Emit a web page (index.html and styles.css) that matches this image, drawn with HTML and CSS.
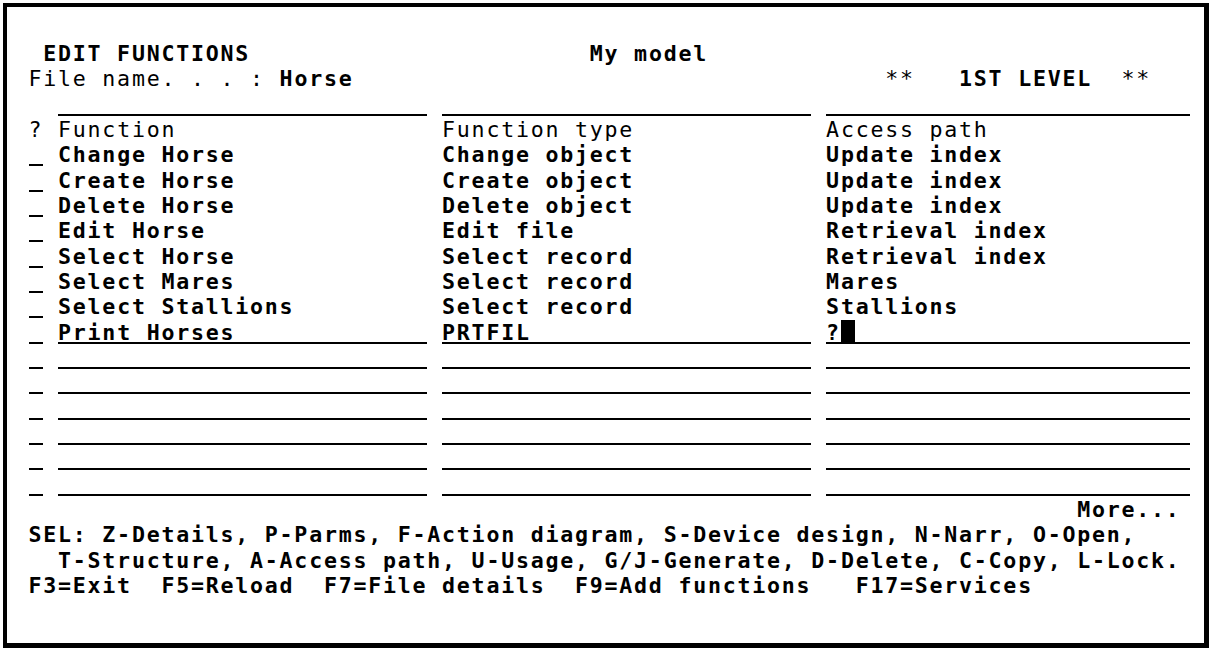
FILE: index.html
```html
<!DOCTYPE html>
<html>

<head>
    <title>Edit Functions</title>
    <link rel="stylesheet" href="styles.css">
</head>

<body>
    <div class="screen">
        <div class="row"><span class="hi"> EDIT FUNCTIONS</span>                       <span class="hi">My model</span></div>
        <div class="row">File name. . . : <span class="hi">Horse</span>                                    **   <span class="hi">1ST LEVEL</span>  **</div>
        <div class="row">  <span class="fld"></span> <span class="fld"></span> <span class="fld"></span></div>
        <div class="row">? <span class="cell">Function</span> <span class="cell">Function type</span> <span class="cell">Access path</span></div>

        <!-- existing functions -->
        <div class="row hi"><span class="opt"></span> <span class="cell">Change Horse</span> <span class="cell">Change object</span> <span class="cell">Update index</span></div>
        <div class="row hi"><span class="opt"></span> <span class="cell">Create Horse</span> <span class="cell">Create object</span> <span class="cell">Update index</span></div>
        <div class="row hi"><span class="opt"></span> <span class="cell">Delete Horse</span> <span class="cell">Delete object</span> <span class="cell">Update index</span></div>
        <div class="row hi"><span class="opt"></span> <span class="cell">Edit Horse</span> <span class="cell">Edit file</span> <span class="cell">Retrieval index</span></div>
        <div class="row hi"><span class="opt"></span> <span class="cell">Select Horse</span> <span class="cell">Select record</span> <span class="cell">Retrieval index</span></div>
        <div class="row hi"><span class="opt"></span> <span class="cell">Select Mares</span> <span class="cell">Select record</span> <span class="cell">Mares</span></div>
        <div class="row hi"><span class="opt"></span> <span class="cell">Select Stallions</span> <span class="cell">Select record</span> <span class="cell">Stallions</span></div>

        <!-- new function being keyed in -->
        <div class="row hi"><span class="opt"></span> <span class="fld">Print Horses</span> <span class="fld">PRTFIL</span> <span class="fld">?<span class="cursor"></span></span></div>

        <!-- blank input lines -->
        <div class="row"><span class="opt"></span> <span class="fld"></span> <span class="fld"></span> <span class="fld"></span></div>
        <div class="row"><span class="opt"></span> <span class="fld"></span> <span class="fld"></span> <span class="fld"></span></div>
        <div class="row"><span class="opt"></span> <span class="fld"></span> <span class="fld"></span> <span class="fld"></span></div>
        <div class="row"><span class="opt"></span> <span class="fld"></span> <span class="fld"></span> <span class="fld"></span></div>
        <div class="row"><span class="opt"></span> <span class="fld"></span> <span class="fld"></span> <span class="fld"></span></div>
        <div class="row"><span class="opt"></span> <span class="fld"></span> <span class="fld"></span> <span class="fld"></span></div>

        <div class="row hi more">More...</div>
        <div class="row hi">SEL: Z-Details, P-Parms, F-Action diagram, S-Device design, N-Narr, O-Open,</div>
        <div class="row hi">  T-Structure, A-Access path, U-Usage, G/J-Generate, D-Delete, C-Copy, L-Lock.</div>
        <div class="row hi">F3=Exit  F5=Reload  F7=File details  F9=Add functions   F17=Services</div>
    </div>
</body>

</html>
```

FILE: styles.css
```css
:root {
    /* one terminal column */
    --cw: 14.77px;
}

body {
    margin: 0;
    background-color: #fff;
}

.screen {
    box-sizing: border-box;
    margin: 3px;
    width: 1206px;
    height: 645px;
    border: 4px solid #000;
    border-right-width: 5px;
    border-bottom-width: 5px;
    /* column 1 starts at x = 28.5 */
    padding: 34px 0 0 21.5px;
    color: #000;
    font-family: "DejaVu Sans Mono", "Liberation Mono", monospace;
    font-size: 21.6px;
    letter-spacing: 1.77px;
}

.row {
    height: 25.33px;
    line-height: 25.33px;
    white-space: pre;
}

/* high intensity text */
.hi {
    font-weight: bold;
}

.cell,
.fld,
.opt {
    display: inline-block;
    vertical-align: top;
    box-sizing: border-box;
    height: 24px;
    width: calc(25 * var(--cw));
}

/* underlined input fields */
.fld,
.opt {
    border-bottom: 2px solid #000;
}

/* last column stops a little short of the frame */
.fld:last-child {
    width: calc(25 * var(--cw) - 5px);
}

.opt {
    width: 14px;
    margin-right: 0.77px;
}

.cursor {
    display: inline-block;
    vertical-align: top;
    width: 14px;
    height: 23px;
    background-color: #000;
}

.more {
    width: calc(78 * var(--cw));
    text-align: right;
}
```
